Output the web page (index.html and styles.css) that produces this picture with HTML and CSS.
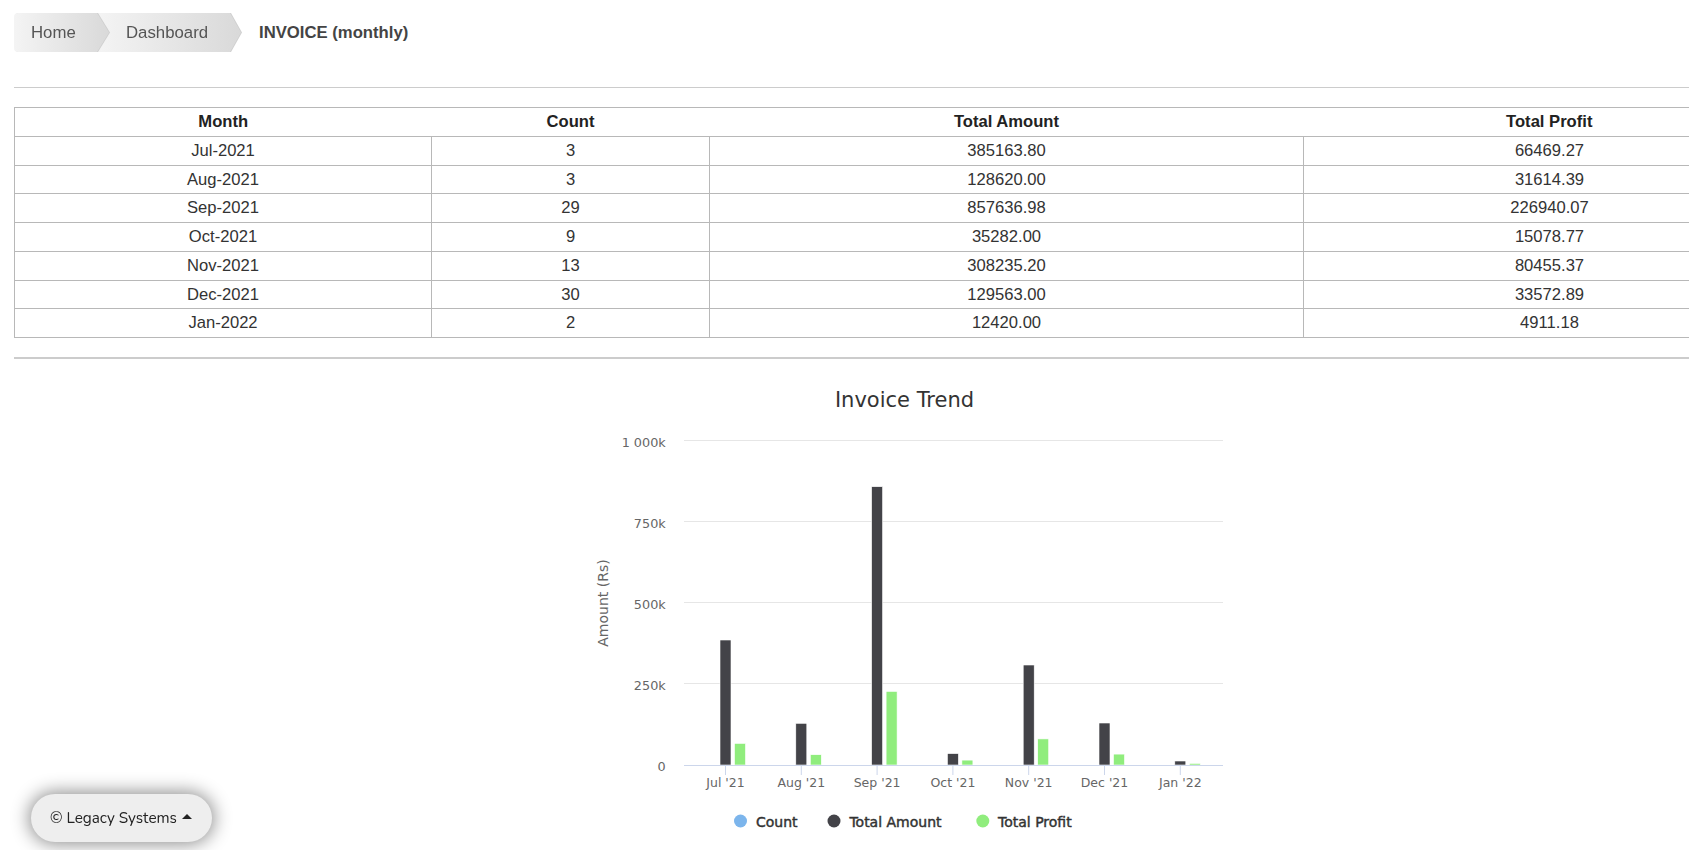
FILE: index.html
```html
<!DOCTYPE html>
<html lang="en">
<head>
<meta charset="utf-8">
<title>INVOICE (monthly)</title>
<link rel="stylesheet" href="styles.css">
</head>
<body>
<div class="page">
  <nav class="breadcrumb">
    <span class="crumb-wrap crumb-home"><a class="crumb">Home</a></span>
    <span class="crumb-wrap crumb-dash"><a class="crumb">Dashboard</a></span>
    <span class="crumb-current">INVOICE (monthly)</span>
  </nav>

  <div class="rule rule-thin"></div>

  <table class="report">
    <colgroup>
      <col class="c-month"><col class="c-count"><col class="c-amount"><col class="c-profit">
    </colgroup>
    <thead>
      <tr><th>Month</th><th>Count</th><th>Total Amount</th><th>Total Profit</th></tr>
    </thead>
    <tbody>
      <tr><td>Jul-2021</td><td>3</td><td>385163.80</td><td>66469.27</td></tr>
      <tr><td>Aug-2021</td><td>3</td><td>128620.00</td><td>31614.39</td></tr>
      <tr><td>Sep-2021</td><td>29</td><td>857636.98</td><td>226940.07</td></tr>
      <tr><td>Oct-2021</td><td>9</td><td>35282.00</td><td>15078.77</td></tr>
      <tr><td>Nov-2021</td><td>13</td><td>308235.20</td><td>80455.37</td></tr>
      <tr><td>Dec-2021</td><td>30</td><td>129563.00</td><td>33572.89</td></tr>
      <tr><td>Jan-2022</td><td>2</td><td>12420.00</td><td>4911.18</td></tr>
    </tbody>
  </table>

  <div class="rule rule-thick"></div>

  <div class="chart-wrap">
    <svg class="chart" width="701" height="480" viewBox="0 0 701 480" xmlns="http://www.w3.org/2000/svg">
      <text class="ch-title" x="350.5" y="46.7" text-anchor="middle">Invoice Trend</text>

      <g class="grid">
        <line x1="130" y1="80.5" x2="669" y2="80.5"/>
        <line x1="130" y1="161.5" x2="669" y2="161.5"/>
        <line x1="130" y1="242.5" x2="669" y2="242.5"/>
        <line x1="130" y1="323.5" x2="669" y2="323.5"/>
      </g>

      <g class="ylab" text-anchor="end">
        <text x="111.7" y="86.5">1 000k</text>
        <text x="111.7" y="167.5">750k</text>
        <text x="111.7" y="248.5">500k</text>
        <text x="111.7" y="329.5">250k</text>
        <text x="111.7" y="411">0</text>
      </g>

      <text class="ytitle" transform="translate(53.5,243) rotate(-90)" text-anchor="middle">Amount (Rs)</text>

      <g class="bars-amount">
        <rect x="166" y="280" width="11" height="125"/>
        <rect x="241.8" y="363.3" width="11" height="41.7"/>
        <rect x="317.6" y="126.7" width="11" height="278.3"/>
        <rect x="393.4" y="393.6" width="11" height="11.4"/>
        <rect x="469.2" y="305" width="11" height="100"/>
        <rect x="545" y="363" width="11" height="42"/>
        <rect x="620.8" y="401" width="11" height="4"/>
      </g>
      <g class="bars-profit">
        <rect x="180.5" y="383.4" width="11" height="21.6"/>
        <rect x="256.3" y="394.7" width="11" height="10.3"/>
        <rect x="332.1" y="331.4" width="11" height="73.6"/>
        <rect x="407.9" y="400.1" width="11" height="4.9"/>
        <rect x="483.7" y="378.9" width="11" height="26.1"/>
        <rect x="559.5" y="394.1" width="11" height="10.9"/>
        <rect x="635.3" y="403.4" width="11" height="1.6"/>
      </g>

      <line class="axis" x1="130" y1="405.5" x2="669" y2="405.5"/>
      <g class="ticks">
        <line x1="171.5" y1="405" x2="171.5" y2="415"/>
        <line x1="247.3" y1="405" x2="247.3" y2="415"/>
        <line x1="323.1" y1="405" x2="323.1" y2="415"/>
        <line x1="398.9" y1="405" x2="398.9" y2="415"/>
        <line x1="474.7" y1="405" x2="474.7" y2="415"/>
        <line x1="550.5" y1="405" x2="550.5" y2="415"/>
        <line x1="626.3" y1="405" x2="626.3" y2="415"/>
      </g>
      <g class="xlab" text-anchor="middle">
        <text x="171.5" y="427">Jul '21</text>
        <text x="247.3" y="427">Aug '21</text>
        <text x="323.1" y="427">Sep '21</text>
        <text x="398.9" y="427">Oct '21</text>
        <text x="474.7" y="427">Nov '21</text>
        <text x="550.5" y="427">Dec '21</text>
        <text x="626.3" y="427">Jan '22</text>
      </g>

      <g class="legend">
        <circle class="dot-count" cx="186.5" cy="461" r="6.5"/>
        <text x="202" y="467">Count</text>
        <circle class="dot-amount" cx="280" cy="461" r="6.5"/>
        <text x="295.4" y="467">Total Amount</text>
        <circle class="dot-profit" cx="428.8" cy="461" r="6.5"/>
        <text x="444" y="467">Total Profit</text>
      </g>
    </svg>
  </div>
</div>

<div class="footer-badge">© Legacy Systems <span class="caret"></span></div>
</body>
</html>
```

FILE: styles.css
```css
html {
  overflow: hidden;
}
body {
  margin: 0;
  background: #fff;
  font-family: "Liberation Sans", Arial, sans-serif;
  color: #333;
}
.page {
  width: 1781px;
  padding: 13px 0 0 14px;
}

/* breadcrumb */
.breadcrumb {
  display: flex;
  align-items: center;
  height: 39px;
  font-size: 16.8px;
}
.crumb-wrap {
  display: block;
  height: 39px;
  filter: drop-shadow(1px 0 0 #cfcfcf);
}
.crumb-home {
  position: relative;
  z-index: 2;
}
.crumb-dash {
  margin-left: -12px;
  z-index: 1;
}
.crumb {
  display: flex;
  align-items: center;
  height: 39px;
  box-sizing: border-box;
  color: #555;
  text-decoration: none;
  background: linear-gradient(to right, #f4f4f4, #d9d9d9);
}
.crumb-home .crumb {
  width: 95px;
  padding-left: 17px;
  border-radius: 4px 0 0 4px;
  clip-path: polygon(0 0, calc(100% - 12px) 0, 100% 50%, calc(100% - 12px) 100%, 0 100%);
}
.crumb-dash .crumb {
  width: 144px;
  padding-left: 29px;
  clip-path: polygon(0 0, calc(100% - 11px) 0, 100% 50%, calc(100% - 11px) 100%, 0 100%);
}
.crumb-current {
  margin-left: 18px;
  font-weight: bold;
  font-size: 16.7px;
  color: #444;
}

/* rules */
.rule {
  border-top: 1px solid #cccccc;
}
.rule-thin {
  margin-top: 35px;
}
.rule-thick {
  margin-top: 19px;
  border-top-width: 2px;
}

/* table */
.report {
  margin-top: 19px;
  width: 1781px;
  border-collapse: collapse;
  border: 1px solid #b8b8b8;
  table-layout: fixed;
  font-size: 16.6px;
}
.c-month { width: 417px; }
.c-count { width: 278px; }
.c-amount { width: 594px; }
.c-profit { width: 492px; }
.report th,
.report td {
  text-align: center;
  padding: 4px 8px;
  line-height: 19.75px;
}
.report th {
  font-weight: bold;
  color: #222;
  border-bottom: 1px solid #b8b8b8;
}
.report td {
  border: 1px solid #b8b8b8;
  color: #333;
}

/* chart */
.chart-wrap {
  display: flex;
  justify-content: center;
  margin-top: 1px;
}
.chart {
  display: block;
  font-family: "DejaVu Sans", Verdana, sans-serif;
}
.ch-title {
  font-size: 21px;
  fill: #333333;
}
.grid line {
  stroke: #e6e6e6;
  stroke-width: 1;
}
.axis {
  stroke: #ccd6eb;
  stroke-width: 1;
}
.ticks line {
  stroke: #ccd6eb;
  stroke-width: 1;
}
.ylab text,
.xlab text {
  font-size: 12.8px;
  fill: #666666;
}
.xlab text {
  font-size: 12.5px;
}
.ytitle {
  font-size: 14px;
  fill: #666666;
}
.bars-amount rect {
  fill: #434348;
  stroke: #ffffff;
  stroke-width: 0.6;
}
.bars-profit rect {
  fill: #90ed7d;
  stroke: #ffffff;
  stroke-width: 0.6;
}
.legend text {
  font-size: 14px;
  fill: #333333;
  stroke: #333333;
  stroke-width: 0.45;
}
.dot-count { fill: #7cb5ec; }
.dot-amount { fill: #434348; }
.dot-profit { fill: #90ed7d; }

/* footer badge */
.footer-badge {
  position: fixed;
  left: 31px;
  bottom: 8px;
  width: 181px;
  height: 48px;
  box-sizing: border-box;
  padding-left: 19px;
  display: flex;
  align-items: center;
  gap: 5px;
  background: #eeeeee;
  border-radius: 24px;
  box-shadow: 0 0 18px 2px rgba(0, 0, 0, 0.45);
  font-family: "Nunito", "Lato", "Noto Sans", sans-serif;
  font-size: 15.3px;
  color: #222;
}
.caret {
  width: 0;
  height: 0;
  border-left: 5.5px solid transparent;
  border-right: 5.5px solid transparent;
  border-bottom: 5px solid #222;
  margin-top: -3px;
}
```
